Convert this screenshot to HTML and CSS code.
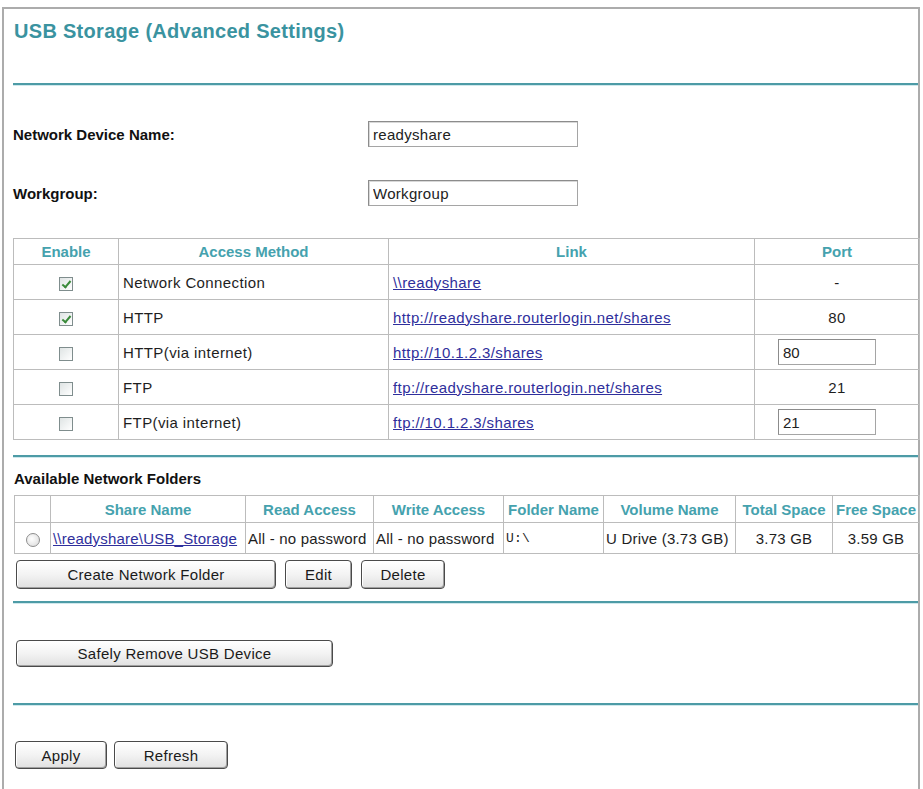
FILE: index.html
```html
<!DOCTYPE html>
<html lang="en">
<head>
<meta charset="utf-8">
<title>USB Storage (Advanced Settings)</title>
<link rel="stylesheet" href="styles.css">
</head>
<body>
<div class="frame">
  <h1 class="title">USB Storage (Advanced Settings)</h1>
  <div class="rule rule-top"></div>

  <div class="field field-first">
    <label class="field-label">Network Device Name:</label>
    <input class="text-input" type="text" value="readyshare">
  </div>
  <div class="field field-second">
    <label class="field-label">Workgroup:</label>
    <input class="text-input" type="text" value="Workgroup">
  </div>

  <table class="grid access">
    <colgroup>
      <col class="c-enable"><col class="c-method"><col class="c-link"><col class="c-port">
    </colgroup>
    <thead>
      <tr><th>Enable</th><th>Access Method</th><th>Link</th><th>Port</th></tr>
    </thead>
    <tbody>
      <tr>
        <td class="center"><span class="check on"></span></td>
        <td>Network Connection</td>
        <td><a href="#">\\readyshare</a></td>
        <td class="center">-</td>
      </tr>
      <tr>
        <td class="center"><span class="check on"></span></td>
        <td>HTTP</td>
        <td><a href="#">http://readyshare.routerlogin.net/shares</a></td>
        <td class="center">80</td>
      </tr>
      <tr>
        <td class="center"><span class="check"></span></td>
        <td>HTTP(via internet)</td>
        <td><a href="#">http://10.1.2.3/shares</a></td>
        <td class="port-edit"><input class="port-input" type="text" value="80"></td>
      </tr>
      <tr>
        <td class="center"><span class="check"></span></td>
        <td>FTP</td>
        <td><a href="#">ftp://readyshare.routerlogin.net/shares</a></td>
        <td class="center">21</td>
      </tr>
      <tr>
        <td class="center"><span class="check"></span></td>
        <td>FTP(via internet)</td>
        <td><a href="#">ftp://10.1.2.3/shares</a></td>
        <td class="port-edit"><input class="port-input" type="text" value="21"></td>
      </tr>
    </tbody>
  </table>

  <div class="rule rule-mid"></div>

  <h2 class="section">Available Network Folders</h2>
  <table class="grid folders">
    <colgroup>
      <col class="f-radio"><col class="f-share"><col class="f-read"><col class="f-write">
      <col class="f-folder"><col class="f-volume"><col class="f-total"><col class="f-free">
    </colgroup>
    <thead>
      <tr>
        <th></th><th>Share Name</th><th>Read Access</th><th>Write Access</th>
        <th>Folder Name</th><th>Volume Name</th><th>Total Space</th><th>Free Space</th>
      </tr>
    </thead>
    <tbody>
      <tr>
        <td class="center"><span class="radio"></span></td>
        <td><a href="#">\\readyshare\USB_Storage</a></td>
        <td>All - no password</td>
        <td>All - no password</td>
        <td class="mono">U:\</td>
        <td>U Drive (3.73 GB)</td>
        <td class="center">3.73 GB</td>
        <td class="center">3.59 GB</td>
      </tr>
    </tbody>
  </table>

  <div class="button-row folder-actions">
    <button class="btn btn-create" type="button">Create Network Folder</button>
    <button class="btn btn-edit" type="button">Edit</button>
    <button class="btn btn-delete" type="button">Delete</button>
  </div>

  <div class="rule rule-folders"></div>

  <div class="button-row remove-row">
    <button class="btn btn-remove" type="button">Safely Remove USB Device</button>
  </div>

  <div class="rule rule-bottom"></div>

  <div class="button-row apply-row">
    <button class="btn btn-apply" type="button">Apply</button>
    <button class="btn btn-refresh" type="button">Refresh</button>
  </div>
</div>
</body>
</html>
```

FILE: styles.css
```css
html, body {
  margin: 0;
  padding: 0;
  background: #ffffff;
}

body {
  font-family: "Liberation Sans", Arial, sans-serif;
  font-size: 15px;
  color: #1a1a1a;
  overflow: hidden;
}

/* outer page frame, open at the bottom */
.frame {
  margin: 7px 3px 0 2px;
  border: 2px solid #acacac;
  border-bottom: none;
  min-height: 800px;
  padding-left: 9px;
}

.title {
  margin: 10px 0 0 1px;
  font-size: 20px;
  line-height: 24px;
  font-weight: bold;
  letter-spacing: 0.3px;
  color: #3a93a0;
}

.rule {
  height: 2px;
  background: #4d9ba6;
  border-bottom: 1px solid #cfe8ec;
}

.rule-top { margin-top: 40px; }
.rule-mid { margin-top: 15px; }
.rule-folders { margin-top: 12px; }
.rule-bottom { margin-top: 36px; }

/* label / input rows */
.field {
  display: grid;
  grid-template-columns: 355px 210px;
  align-items: center;
  height: 26px;
}

.field-first { margin-top: 35px; }
.field-second { margin-top: 33px; }

.field-label {
  font-weight: bold;
  color: #111;
}

.text-input {
  box-sizing: border-box;
  width: 210px;
  height: 26px;
  margin: 0;
  padding: 0 4px;
  border: 1px solid #a5a5a5;
  border-top-color: #8c8c8c;
  border-left-color: #8c8c8c;
  box-shadow: inset 1px 1px 0 #d8d8d8;
  font-family: "Liberation Sans", Arial, sans-serif;
  font-size: 15px;
  letter-spacing: 0.3px;
  color: #222;
  background: #fff;
}

/* bordered data tables */
.grid {
  border-collapse: collapse;
  table-layout: fixed;
}

.grid th,
.grid td {
  border: 1px solid #bcbcbc;
  padding: 0 4px;
  white-space: nowrap;
  overflow: hidden;
}

.grid th {
  font-weight: bold;
  color: #45a2ae;
  text-align: center;
}

.grid td {
  color: #1e1e1e;
  letter-spacing: 0.4px;
}

.grid a {
  color: #2f2f9c;
  text-decoration: underline;
}

.grid .center { text-align: center; }

.access {
  margin-top: 32px;
  width: 906px;
}

.access th { height: 25px; }
.access td { height: 34px; }

.c-enable { width: 105px; }
.c-method { width: 270px; }
.c-link { width: 366px; }
.c-port { width: 165px; }

.grid .port-edit { padding-left: 23px; }

.port-input {
  box-sizing: border-box;
  width: 98px;
  height: 26px;
  margin: 0;
  padding: 0 4px;
  border: 1px solid #a5a5a5;
  border-top-color: #8c8c8c;
  border-left-color: #8c8c8c;
  font-family: "Liberation Sans", Arial, sans-serif;
  font-size: 15px;
  color: #222;
  vertical-align: middle;
}

/* checkbox drawn with css */
.check {
  display: inline-block;
  position: relative;
  width: 12px;
  height: 12px;
  border: 1px solid #7f8d8d;
  background: linear-gradient(135deg, #dfe4e4, #ffffff);
  vertical-align: middle;
}

.check.on::after {
  content: "";
  position: absolute;
  left: 4px;
  top: 1px;
  width: 3px;
  height: 7px;
  border: solid #3a8a3a;
  border-width: 0 2px 2px 0;
  transform: rotate(40deg);
}

.radio {
  display: inline-block;
  width: 12px;
  height: 12px;
  border: 1px solid #8e8e8e;
  border-radius: 50%;
  background: radial-gradient(circle at 40% 40%, #ffffff, #d8d8d8);
  vertical-align: middle;
}

.section {
  margin: 12px 0 0 1px;
  font-size: 15px;
  line-height: 18px;
  font-weight: bold;
  color: #111;
}

.folders {
  margin: 7px 0 0 1px;
  width: 905px;
}

.folders th { height: 26px; padding: 0 2px; }
.folders td { height: 30px; padding: 0 2px; letter-spacing: 0.2px; }

.f-radio { width: 36px; }
.f-share { width: 195px; }
.f-read { width: 128px; }
.f-write { width: 130px; }
.f-folder { width: 100px; }
.f-volume { width: 132px; }
.f-total { width: 97px; }
.f-free { width: 87px; }

.grid .mono {
  font-family: "Liberation Mono", "Courier New", monospace;
  font-size: 13px;
}

/* buttons */
.button-row {
  display: flex;
  gap: 9px;
  padding-left: 3px;
}

.folder-actions { margin-top: 6px; }
.remove-row { margin-top: 36px; }
.apply-row { margin-top: 35px; padding-left: 2px; gap: 7px; }

.btn {
  box-sizing: border-box;
  height: 29px;
  margin: 0;
  padding: 0;
  border: 1px solid #4a4a4a;
  border-radius: 4px;
  background: linear-gradient(#ffffff, #f3f3f3 50%, #e0e0e0);
  box-shadow: inset -1px -1px 0 #a0a0a0, inset 1px 1px 0 #ffffff;
  font-family: "Liberation Sans", Arial, sans-serif;
  font-size: 15px;
  letter-spacing: 0.3px;
  color: #1a1a1a;
}

.btn-create { width: 260px; }
.btn-edit { width: 67px; }
.btn-delete { width: 84px; }
.btn-remove { width: 317px; height: 27px; }
.btn-apply { width: 92px; height: 28px; }
.btn-refresh { width: 114px; height: 28px; }
```
